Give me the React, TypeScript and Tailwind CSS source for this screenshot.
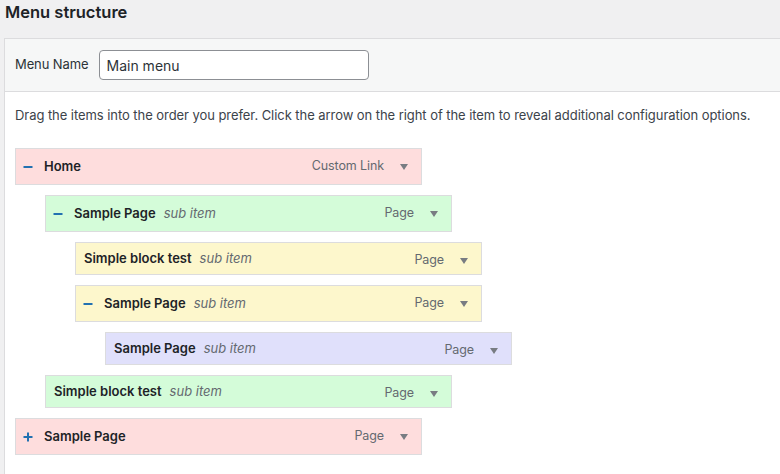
import React from 'react';

type Item = {
  title: string;
  depth: number;
  type: string;
  color: string;
  toggle?: 'minus' | 'plus';
  sub?: boolean;
};

const ITEMS: Item[] = [
  { title: 'Home', depth: 0, type: 'Custom Link', color: 'bg-[#fedddd]', toggle: 'minus' },
  { title: 'Sample Page', depth: 1, type: 'Page', color: 'bg-[#d4fcd9]', toggle: 'minus', sub: true },
  { title: 'Simple block test', depth: 2, type: 'Page', color: 'bg-[#fdf7cc]', sub: true },
  { title: 'Sample Page', depth: 2, type: 'Page', color: 'bg-[#fdf7cc]', toggle: 'minus', sub: true },
  { title: 'Sample Page', depth: 3, type: 'Page', color: 'bg-[#e0e0fb]', sub: true },
  { title: 'Simple block test', depth: 1, type: 'Page', color: 'bg-[#d4fcd9]', sub: true },
  { title: 'Sample Page', depth: 0, type: 'Page', color: 'bg-[#fedddd]', toggle: 'plus' },
];

const indent = ['ml-0', 'ml-[30px]', 'ml-[60px]', 'ml-[90px]'];

const Toggle = ({ kind }: { kind: 'minus' | 'plus' }) => (
  <svg width="10" height="10" viewBox="0 0 10 10" className="ml-[7px] mr-[11px] shrink-0">
    <rect x="0.5" y="4" width="9" height="2" fill="#2271b1" />
    {kind === 'plus' && <rect x="4" y="0.5" width="2" height="9" fill="#2271b1" />}
  </svg>
);

const MenuItem = ({ item }: { item: Item }) => (
  <div
    className={`${indent[item.depth]} ${item.color} ${item.toggle ? 'h-[37px]' : 'h-[33px]'} w-[407px] border border-[#dcdcde] flex items-center`}
  >
    {item.toggle ? <Toggle kind={item.toggle} /> : <span className="w-[8px] shrink-0" />}
    <span className="font-semibold text-[13px] text-[#1d2327]">{item.title}</span>
    {item.sub && <span className="italic text-[13px] text-[#646970] ml-[8px]">sub item</span>}
    <div className="ml-auto self-start h-[35px] flex items-center pr-[13px]">
      <span className="text-[12.5px] tracking-[-0.1px] text-[#646970]">{item.type}</span>
      <svg width="8" height="6" viewBox="0 0 8 6" className="ml-[16px]">
        <path d="M0 0 L8 0 L4 6 Z" fill="#787c82" />
      </svg>
    </div>
  </div>
);

export default function App() {
  return (
    <div className="w-[780px] h-[474px] overflow-hidden bg-[#f0f0f1] pl-[4px] font-['Inter',sans-serif] text-[#3c434a]">
      <h2 className="pl-[1px] h-[38px] leading-[24px] text-[16.5px] font-semibold text-[#1d2327]">Menu structure</h2>
      <div className="w-[820px] border border-[#dcdcde] bg-white">
        <div className="h-[53px] bg-[#f6f7f7] border-b border-[#dcdcde] flex items-center px-[10px]">
          <label className="text-[13px] text-[#2c3338] mr-[10px] tracking-[-0.1px]">Menu Name</label>
          <div className="w-[270px] h-[30px] rounded-[4px] border border-[#8c8f94] bg-white flex items-center px-[7px] text-[14px] text-[#2c3338]">
            Main menu
          </div>
        </div>
        <div className="px-[10px] pt-[13px] pb-[40px]">
          <p className="text-[13px] leading-[20px] tracking-[-0.06px] text-[#3c434a]">
            Drag the items into the order you prefer. Click the arrow on the right of the item to reveal additional configuration options.
          </p>
          <div className="mt-[23px] flex flex-col gap-[10px]">
            {ITEMS.map((item, i) => (
              <MenuItem key={i} item={item} />
            ))}
          </div>
        </div>
      </div>
    </div>
  );
}
